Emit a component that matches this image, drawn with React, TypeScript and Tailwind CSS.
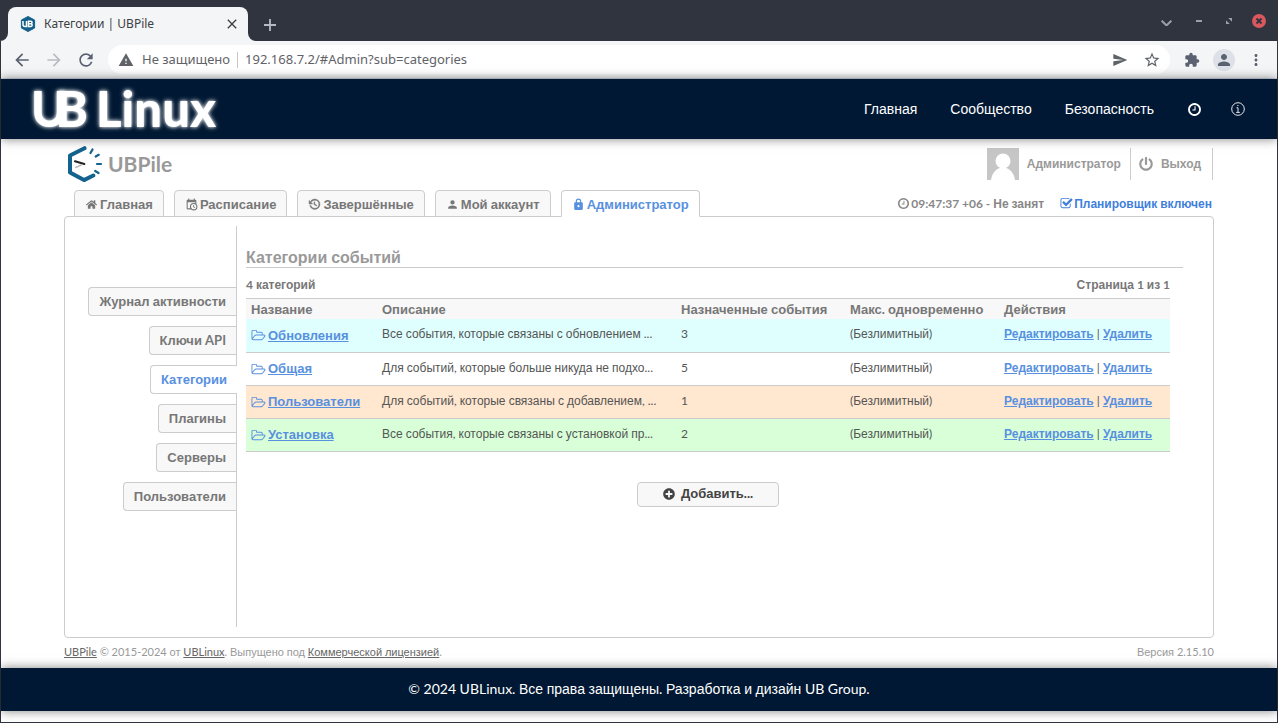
import type { ReactNode } from "react";
import { FaHome, FaPlusCircle, FaPowerOff } from "react-icons/fa";
import {
  MdArrowBack,
  MdArrowForward,
  MdClose,
  MdExtension,
  MdMoreVert,
  MdPerson,
  MdRefresh,
  MdSend,
  MdStarBorder,
  MdWarning,
} from "react-icons/md";

type IconProps = { d: string; box?: string; className?: string };

function Icon({ d, box = "0 0 1792 1792", className }: IconProps) {
  return (
    <svg viewBox={box} fill="currentColor" className={className} aria-hidden="true">
      <path d={d} />
    </svg>
  );
}

const CLOCK =
  "M1024 544v448q0 14-9 23t-23 9h-320q-14 0-23-9t-9-23v-64q0-14 9-23t23-9h224v-352q0-14 9-23t23-9h64q14 0 23 9t9 23zm416 352q0-148-73-273t-198-198-273-73-273 73-198 198-73 273 73 273 198 198 273 73 273-73 198-198 73-273zm224 0q0 209-103 385.5t-279.5 279.5-385.5 103-385.5-103-279.5-279.5-103-385.5 103-385.5 279.5-279.5 385.5-103 385.5 103 279.5 279.5 103 385.5z";
const CHECK_SQUARE =
  "M1472 930v318q0 119-84.5 203.5t-203.5 84.5h-832q-119 0-203.5-84.5t-84.5-203.5v-832q0-119 84.5-203.5t203.5-84.5h832q63 0 117 25 15 7 18 23 3 17-9 29l-49 49q-10 10-23 10-3 0-9-2-23-6-45-6h-832q-66 0-113 47t-47 113v832q0 66 47 113t113 47h832q66 0 113-47t47-113v-254q0-13 9-22l64-64q10-10 23-10 6 0 12 3 20 8 20 29zm231-489l-814 814q-24 24-57 24t-57-24l-430-430q-24-24-24-57t24-57l110-110q24-24 57-24t57 24l263 263 647-647q24-24 57-24t57 24l110 110q24 24 24 57t-24 57z";
const FOLDER_OPEN =
  "M1845 1000q0-35-53-35h-1088q-40 0-85.5 21.5t-71.5 52.5l-294 363q-18 24-18 40 0 35 53 35h1088q40 0 86-22t71-53l294-363q18-22 18-39zm-1141-163h768v-160q0-40-28-68t-68-28h-576q-40 0-68-28t-28-68v-64q0-40-28-68t-68-28h-320q-40 0-68 28t-28 68v853l256-315q44-53 116-87.5t140-34.5zm1269 163q0 62-46 120l-295 363q-43 53-116 87.5t-140 34.5h-1088q-92 0-158-66t-66-158v-960q0-92 66-158t158-66h320q92 0 158 66t66 158v32h544q92 0 158 66t66 158v160h192q54 0 99 24.5t67 70.5q15 32 15 68z";
const CALENDAR_CLOCK =
  "M15,13H16.5V15.82L18.94,17.23L18.19,18.53L15,16.69V13M19,8H5V19H9.67C9.24,18.09 9,17.07 9,16A7,7 0 0,1 16,9C17.07,9 18.09,9.24 19,9.67V8M5,21C3.89,21 3,20.1 3,19V5C3,3.89 3.89,3 5,3H6V1H8V3H16V1H18V3H19A2,2 0 0,1 21,5V11.1C22.24,12.36 23,14.09 23,16A7,7 0 0,1 16,23C14.09,23 12.36,22.24 11.1,21H5M16,11.15A4.85,4.85 0 0,0 11.15,16C11.15,18.68 13.32,20.85 16,20.85A4.85,4.85 0 0,0 20.85,16C20.85,13.32 18.68,11.15 16,11.15Z";
const HISTORY =
  "M11,7V12.11L15.71,14.9L16.5,13.62L12.5,11.25V7M12.5,2C8.97,2 5.91,3.92 4.27,6.77L2,4.5V11H8.5L5.75,8.25C6.96,5.73 9.5,4 12.5,4A7.5,7.5 0 0,1 20,11.5A7.5,7.5 0 0,1 12.5,19C9.23,19 6.47,16.91 5.44,14H3.34C4.44,18.03 8.11,21 12.5,21C17.74,21 22,16.75 22,11.5A9.5,9.5 0 0,0 12.5,2Z";
const ACCOUNT =
  "M12,4A4,4 0 0,1 16,8A4,4 0 0,1 12,12A4,4 0 0,1 8,8A4,4 0 0,1 12,4M12,14C16.42,14 20,15.79 20,18V20H4V18C4,15.79 7.58,14 12,14Z";
const LOCK =
  "M12,17A2,2 0 0,0 14,15C14,13.89 13.1,13 12,13A2,2 0 0,0 10,15A2,2 0 0,0 12,17M18,8A2,2 0 0,1 20,10V20A2,2 0 0,1 18,22H6A2,2 0 0,1 4,20V10C4,8.89 4.9,8 6,8H7V6A5,5 0 0,1 12,1A5,5 0 0,1 17,6V8H18M12,3A3,3 0 0,0 9,6V8H15V6A3,3 0 0,0 12,3Z";

// Latin, digits and punctuation are set in Lato, Cyrillic words in Liberation Sans
function T({ children }: { children: string }) {
  return (
    <span>
      {children.split(/([А-Яа-яЁё]+)/).map((part, i) =>
        i % 2 ? (
          <span key={i} className="font-['Liberation_Sans',sans-serif]">
            {part}
          </span>
        ) : (
          part
        ),
      )}
    </span>
  );
}

const TABS: { label: string; icon: ReactNode; active?: boolean }[] = [
  { label: "Главная", icon: <FaHome className="size-[13px] p-px" /> },
  { label: "Расписание", icon: <Icon d={CALENDAR_CLOCK} box="0 0 24 24" className="size-[13px]" /> },
  {
    label: "Завершённые",
    icon: (
      <svg viewBox="0 0 24 24" className="size-[13px]" fill="currentColor" stroke="currentColor">
        <path d={HISTORY} />
      </svg>
    ),
  },
  { label: "Мой аккаунт", icon: <Icon d={ACCOUNT} box="0 0 24 24" className="size-[13px]" /> },
  { label: "Администратор", icon: <Icon d={LOCK} box="0 0 24 24" className="size-[13px]" />, active: true },
];

const SECTIONS = ["Журнал активности", "Ключи API", "Категории", "Плагины", "Серверы", "Пользователи"];

const CATEGORIES = [
  { name: "Обновления", text: "Все события, которые связаны с обновлением ...", events: 3, tone: "bg-[#dfffff]" },
  { name: "Общая", text: "Для событий, которые больше никуда не подхо...", events: 5, tone: "bg-white" },
  { name: "Пользователи", text: "Для событий, которые связаны с добавлением, ...", events: 1, tone: "bg-[#ffe7d0]" },
  { name: "Установка", text: "Все события, которые связаны с установкой пр...", events: 2, tone: "bg-[#d8ffd8]" },
];

function BrowserChrome() {
  return (
    <div className="font-['Noto_Sans',sans-serif] text-[#3c4043]">
      <div className="flex h-10 items-end bg-[#2f343f] pl-[7px]">
        <div className="relative flex h-[34px] w-60 items-center rounded-t-lg bg-[#f4f5f7] pr-2 pl-3">
          <svg viewBox="0 0 8 8" className="absolute bottom-0 -left-2 size-2" fill="#f4f5f7">
            <path d="M8 0v8H0a8 8 0 0 0 8-8z" />
          </svg>
          <svg viewBox="0 0 8 8" className="absolute -right-2 bottom-0 size-2" fill="#f4f5f7">
            <path d="M0 0v8h8a8 8 0 0 1-8-8z" />
          </svg>
          <svg viewBox="0 0 16 16" className="mr-2 size-4">
            <path d="M8 .5 14.6 4v8L8 15.5 1.4 12V4z" fill="#15608a" stroke="#15608a" strokeLinejoin="round" />
            <path
              d="M3 5v3.500a2 2 0 0 0 2 2h1.500V5M8.500 7.700h3M8.500 5.200h2.300a1.200 1.200 0 0 1 0 2.500 1.400 1.400 0 0 1 0 2.800H8.500z"
              fill="none"
              stroke="#fff"
              strokeWidth="1.5"
            />
          </svg>
          <span className="grow text-[12px]">Категории | UBPile</span>
          <button type="button" aria-label="Закрыть вкладку">
            <MdClose className="size-4" />
          </button>
        </div>
        <button type="button" aria-label="Новая вкладка" className="mb-[10px] ml-4 text-[#b4bac6]">
          <svg viewBox="0 0 12 12" className="size-3" stroke="currentColor" strokeWidth="1.8">
            <path d="M6 0v12M0 6h12" />
          </svg>
        </button>
        <div className="flex h-full grow items-center justify-end gap-6 pr-[11px] text-[#9aa0ab]">
          <svg viewBox="0 0 10 6" className="mt-1 w-[11px]" fill="none" stroke="currentColor" strokeWidth="1.8">
            <path d="m.6.600 4.400 4.400L9.400.6" />
          </svg>
          <span className="h-[2px] w-[6px] bg-current" />
          <svg viewBox="0 0 6 6" className="size-[6px]" fill="currentColor">
            <path d="M2.200 0H6v3.800zM0 2.200V6h3.800z" />
          </svg>
          <svg viewBox="0 0 14 14" className="-ml-1 size-[14px]">
            <circle cx="7" cy="7" r="7" fill="#d8585e" />
            <path d="m4.500 4.500 5 5m0-5-5 5" stroke="#2f343f" strokeWidth="1.8" />
          </svg>
        </div>
      </div>
      <div className="flex h-[38px] items-center border-b border-[#d5d9e2] bg-[#f4f5f7] pr-3 pl-[11px] text-[#5a6170]">
        <button type="button" aria-label="Назад">
          <MdArrowBack className="size-5" />
        </button>
        <button type="button" aria-label="Вперёд" className="ml-3 text-[#b9bcc2]">
          <MdArrowForward className="size-5" />
        </button>
        <button type="button" aria-label="Обновить" className="mr-3 ml-3">
          <MdRefresh className="size-5" />
        </button>
        <div className="flex h-[29px] grow items-center rounded-full bg-white pr-[9px] pl-[10px] text-[13px] text-[#5f6368]">
          <MdWarning className="size-4" />
          <span className="ml-2">Не защищено</span>
          <span className="mx-[7px] h-4 w-px bg-[#c4c7cb]" />
          <input
            aria-label="Адрес"
            className="grow bg-transparent outline-none"
            defaultValue="192.168.7.2/#Admin?sub=categories"
          />
          <MdSend className="size-4" />
          <MdStarBorder className="ml-[15px] size-[18px]" />
        </div>
        <MdExtension className="ml-[14px] size-4" />
        <span className="ml-[13px] flex size-[22px] items-center justify-center rounded-full bg-[#dde0e6]">
          <MdPerson className="size-[18px]" />
        </span>
        <MdMoreVert className="ml-3 size-[18px]" />
      </div>
    </div>
  );
}

function SiteHeader() {
  return (
    <header className="relative flex h-[60px] items-center justify-between bg-[#001833] pr-8 pl-[30px] text-white shadow-[0_0_10px_rgba(0,0,0,0.5)]">
      <a
        href="#home"
        className="flex self-start text-[49px] leading-[58px] font-black [text-shadow:0_0_5px_rgba(255,255,255,0.9),0_0_3px_rgba(255,255,255,0.6)]"
      >
        <span>U</span>
        <span className="-ml-3">B</span>
        <span className="ml-2">Linux</span>
      </a>
      <nav className="flex items-center gap-[33px] font-['Liberation_Sans',sans-serif] text-[14px]">
        <a href="#main">Главная</a>
        <a href="#community">Сообщество</a>
        <a href="#security">Безопасность</a>
        <a href="#time" aria-label="Время">
          <Icon d={CLOCK} className="size-[15px]" />
        </a>
        <a href="#info" aria-label="Информация" className="-ml-1">
          <svg viewBox="0 0 14 14" className="size-[14px]" fill="none" stroke="currentColor">
            <circle cx="7" cy="7" r="6.300" strokeWidth="0.9" />
            <path d="M5.500 5.800h1.500v4.400M5.200 10.400h3.600M6.300 3.600h1.200" strokeWidth="0.9" />
          </svg>
        </a>
      </nav>
    </header>
  );
}

function PileLogo() {
  return (
    <svg viewBox="0 0 36 36" className="size-9" fill="none" strokeLinecap="round">
      <path
        d="M18.500 2.200 4 9.500v17l14 7.600 9.300-4.600"
        stroke="#14638f"
        strokeWidth="4"
        strokeLinejoin="round"
      />
      <path
        d="m24.500 7 2-3.500M29.700 10.500l3-1.700M31 18h4M29.200 25l3.300 2"
        stroke="#14638f"
        strokeWidth="2.200"
      />
      <path d="m9 15.300 9.300 2.700" stroke="#222" strokeWidth="2.200" />
      <path d="m9.700 21.500 6-2.700" stroke="#bbb" strokeWidth="1.500" />
    </svg>
  );
}

export default function App() {
  return (
    <div className="flex min-h-screen flex-col border border-[#2f343f] bg-white font-['Lato','Liberation_Sans',sans-serif]">
      <BrowserChrome />
      <SiteHeader />

      <main className="mx-[63px] flex grow flex-col">
        <div className="flex h-[51px] items-center justify-between pr-px pb-[2px]">
          <a href="#pile" className="flex items-center gap-[6px] pl-[2px] text-[21px] font-bold text-[#999]">
            <PileLogo />
            <span>UBPile</span>
          </a>
          <div className="flex h-8 items-center text-[12px] font-bold text-[#999]">
            <a href="#account" className="flex h-8 items-center gap-2 border-r border-[#ccc] pr-[9px]">
              <svg viewBox="0 0 32 32" className="size-8">
                <path d="M0 0h32v32H0z" fill="#c6c6c6" />
                <circle cx="16" cy="13" r="7.500" fill="#fff" />
                <path d="M4 32c1-7 5-11 9-12h6c4 1 8 5 9 12z" fill="#fff" />
              </svg>
              <T>Администратор</T>
            </a>
            <a href="#logout" className="flex h-8 items-center gap-2 border-r border-[#ccc] pr-[11px] pl-2">
              <FaPowerOff className="size-[14px]" />
              <T>Выход</T>
            </a>
          </div>
        </div>

        <div className="relative -mb-px flex items-end justify-between pr-[2px] pl-[10px]">
          <nav className="flex gap-[10px] text-[13px] font-bold">
            {TABS.map((t) => (
              <a
                key={t.label}
                href="#tab"
                className={
                  "flex h-[27px] items-center gap-[2px] rounded-t border border-[#ccc] px-[10px] pt-[2px] " +
                  (t.active ? "border-b-white bg-white text-[#5890e0]" : "bg-[#f8f8f8] text-[#777]")
                }
              >
                {t.icon}
                <T>{t.label}</T>
              </a>
            ))}
          </nav>
          <div className="flex h-[27px] items-center text-[12px] font-bold text-[#888]">
            <Icon d={CLOCK} className="mr-px size-[13px]" />
            <T>09:47:37 +06 - Не занят</T>
            <a href="#scheduler" className="ml-4 flex items-center gap-px text-[#3f7fdc]">
              <Icon d={CHECK_SQUARE} className="size-[13px]" />
              <T>Планировщик включен</T>
            </a>
          </div>
        </div>

        <div className="flex grow rounded-sm border border-[#ccc] pt-[9px] pr-[30px] pb-[10px]">
          <nav className="flex w-[172px] shrink-0 flex-col items-end gap-[10px] border-r border-[#ccc] pt-[61px] text-[13px] font-bold">
            {SECTIONS.map((s) => (
              <a
                key={s}
                href="#section"
                className={
                  "flex h-[29px] items-center rounded-l border border-r-0 border-[#ccc] px-[10px] " +
                  (s === "Категории" ? "-mr-px bg-white text-[#5890e0]" : "bg-[#f8f8f8] text-[#777]")
                }
              >
                <T>{s}</T>
              </a>
            ))}
          </nav>

          <section className="grow pt-[22px] pl-[9px]">
            <h1 className="border-b border-[#ccc] text-[16px] leading-[18px] font-bold text-[#999]">
              <T>Категории событий</T>
            </h1>
            <div className="mr-[13px]">
              <div className="flex h-[30px] items-center justify-between pt-1 text-[12px] font-bold text-[#777]">
                <T>4 категорий</T>
                <T>Страница 1 из 1</T>
              </div>
              <table className="w-full table-fixed border-collapse text-left text-[12px] text-[#555]">
                <thead>
                  <tr className="h-5 border-t border-[#ccc] bg-[#f8f8f8] text-[13px] leading-[18px] text-[#777]">
                    <th className="w-[131px] px-[5px] pt-px"><T>Название</T></th>
                    <th className="w-[299px] px-[5px] pt-px"><T>Описание</T></th>
                    <th className="w-[169px] px-[5px] pt-px"><T>Назначенные события</T></th>
                    <th className="w-[154px] px-[5px] pt-px"><T>Макс. одновременно</T></th>
                    <th className="px-[5px] pt-px"><T>Действия</T></th>
                  </tr>
                </thead>
                <tbody>
                  {CATEGORIES.map((c) => (
                    <tr key={c.name} className={"h-[33px] border-b border-[#ccc] " + c.tone}>
                      <td className="px-[5px]">
                        <a href="#edit" className="flex items-center gap-[2px] text-[13px] font-bold text-[#5890e0]">
                          <Icon d={FOLDER_OPEN} box="0 0 2048 1792" className="h-[14px] w-[15px]" />
                          <span className="underline"><T>{c.name}</T></span>
                        </a>
                      </td>
                      <td className="px-[5px] pb-[2px] whitespace-nowrap"><T>{c.text}</T></td>
                      <td className="px-[5px] pb-[2px]">{c.events}</td>
                      <td className="px-[5px] pb-[2px]"><T>(Безлимитный)</T></td>
                      <td className="px-[5px] pb-[2px]">
                        <a href="#edit" className="font-bold text-[#5890e0] underline"><T>Редактировать</T></a>
                        {" | "}
                        <a href="#delete" className="font-bold text-[#5890e0] underline"><T>Удалить</T></a>
                      </td>
                    </tr>
                  ))}
                </tbody>
              </table>
              <button
                type="button"
                className="mx-auto mt-[30px] flex h-[25px] w-[142px] items-center justify-center gap-[6px] rounded border border-[#ccc] bg-[#f8f8f8] text-[13px] font-bold text-[#444]"
              >
                <FaPlusCircle className="size-3" />
                <T>Добавить...</T>
              </button>
            </div>
          </section>
        </div>

        <div className="flex h-[30px] items-center justify-between pb-[2px] text-[11px] text-[#999]">
          <p>
            <a href="#pile" className="text-[#666] underline">UBPile</a>
            <T> © 2015-2024 от </T>
            <a href="#ublinux" className="text-[#666] underline">UBLinux</a>
            <T>. Выпущено под </T>
            <a href="#license" className="text-[#666] underline"><T>Коммерческой лицензией</T></a>.
          </p>
          <T>Версия 2.15.10</T>
        </div>
      </main>

      <footer className="mb-[11px] flex h-[43px] items-center justify-center bg-[#001833] pb-[2px] text-[14px] text-white shadow-[0_0_10px_rgba(0,0,0,0.5)]">
        <T>© 2024 UBLinux. Все права защищены. Разработка и дизайн UB Group.</T>
      </footer>
    </div>
  );
}
